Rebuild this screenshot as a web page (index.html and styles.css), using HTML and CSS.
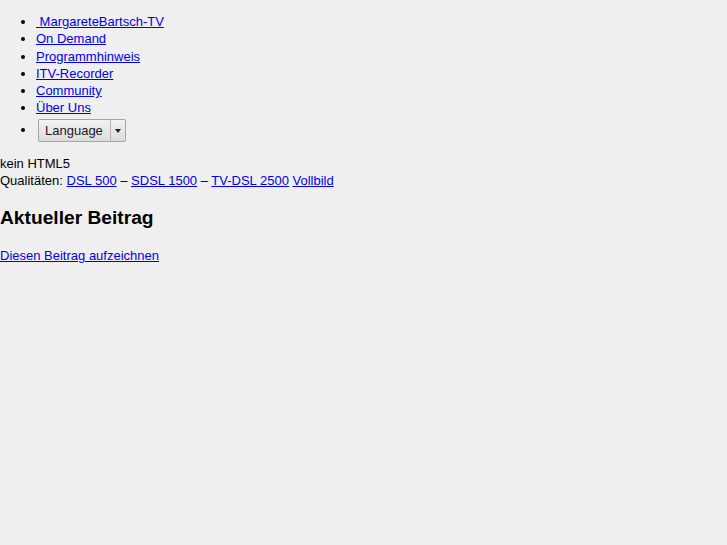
FILE: index.html
```html
<!DOCTYPE html>
<html>
<head>
<meta charset="utf-8">
<link rel="stylesheet" href="styles.css">
</head>
<body>
<ul class="nav">
<li><a href="#">&nbsp;MargareteBartsch-TV</a></li>
<li><a href="#">On Demand</a></li>
<li><a href="#">Programmhinweis</a></li>
<li><a href="#">ITV-Recorder</a></li>
<li><a href="#">Community</a></li>
<li><a href="#">Über Uns</a></li>
<li class="lang-item"><span class="select"><span class="select-label">Language</span><span class="select-arrow"></span></span></li>
</ul>
<div class="info">kein HTML5</div>
<div class="info">Qualitäten: <a href="#">DSL 500</a> – <a href="#">SDSL 1500</a> – <a href="#">TV-DSL 2500</a> <a href="#">Vollbild</a></div>
<h2 class="title">Aktueller Beitrag</h2>
<div class="info"><a href="#">Diesen Beitrag aufzeichnen</a></div>
</body>
</html>
```
FILE: styles.css
```css
html, body {
  background: #efefef;
}
body {
  margin: 0;
  font-family: "Liberation Sans", Arial, sans-serif;
  font-size: 13px;
  line-height: 17.3px;
  color: #000;
}
a {
  color: #0000ee;
}
.nav {
  margin: 13px 0 13px 0;
  padding-left: 36px;
}
.nav li {
  line-height: 17.3px;
}
.lang-item {
  margin-top: 2px;
  height: 23px;
}
.select {
  display: inline-flex;
  align-items: stretch;
  vertical-align: middle;
  margin-left: 2px;
  height: 21px;
  border: 1px solid #a5a5a5;
  border-radius: 2px;
  background: linear-gradient(#f2f2f2, #dcdcdc);
  box-sizing: content-box;
}
.select-label {
  display: flex;
  align-items: center;
  padding: 0 6px 0 6px;
  width: 59px;
  color: #1a1a1a;
}
.select-arrow {
  width: 14px;
  border-left: 1px solid #b5b5b5;
  position: relative;
}
.select-arrow::after {
  content: "";
  position: absolute;
  left: 4px;
  top: 9px;
  border-left: 3px solid transparent;
  border-right: 3px solid transparent;
  border-top: 4px solid #222;
}
.info {
  line-height: 17.3px;
}
.title {
  font-size: 19.2px;
  line-height: 24px;
  margin: 17px 0 17px 0;
}
```
